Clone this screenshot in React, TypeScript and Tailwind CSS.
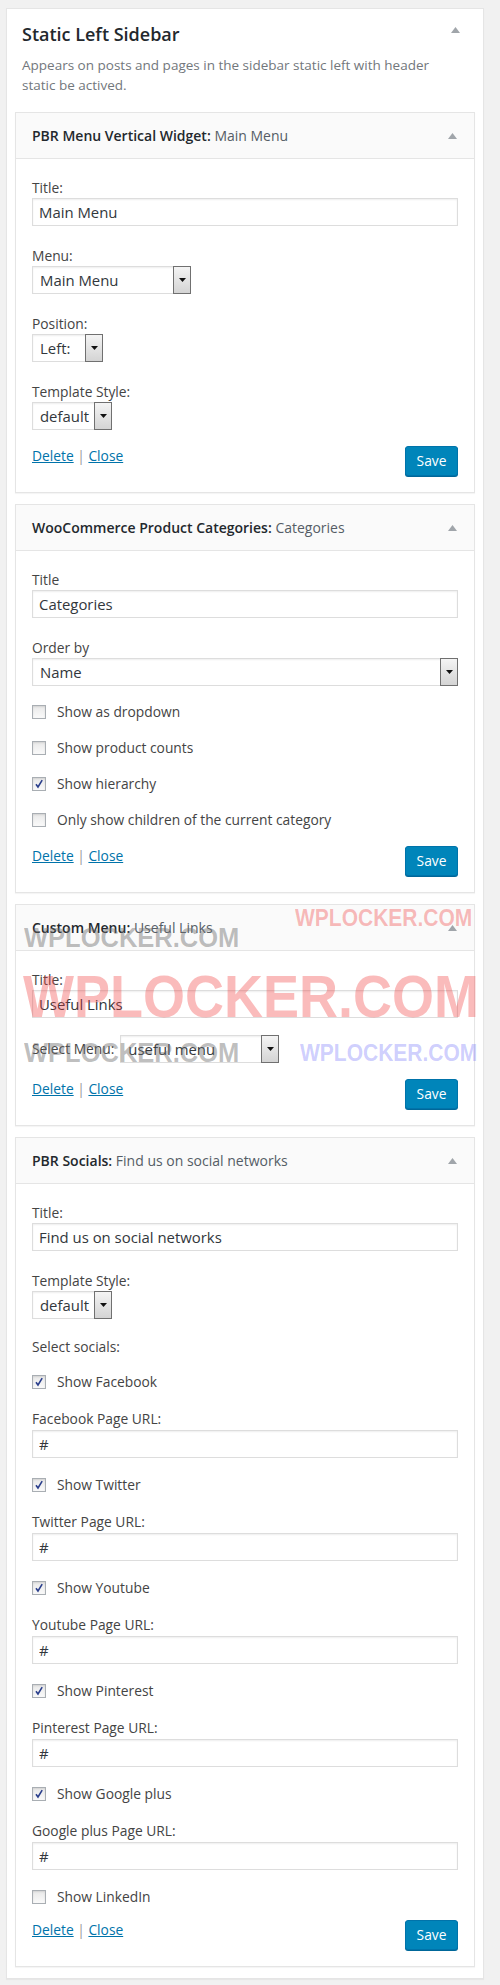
import React from "react";

function Caret({ className = "" }: { className?: string }) {
  return (
    <svg width="9" height="6" viewBox="0 0 9 6" className={className}>
      <polygon points="4.5,0 9,6 0,6" fill="#a0a5aa" />
    </svg>
  );
}

function Label({ children, className = "" }: { children: React.ReactNode; className?: string }) {
  return <div className={`text-[13.8px] leading-[19px] text-[#444] ${className}`}>{children}</div>;
}

function TextInput({ value, className = "mt-px" }: { value: string; className?: string }) {
  return (
    <input
      readOnly
      defaultValue={value}
      className={`block h-[28px] w-full border border-[#ddd] bg-white px-[6px] text-[14.9px] text-[#32373c] shadow-[inset_0_1px_2px_rgba(0,0,0,0.07)] outline-none ${className}`}
    />
  );
}

function Select({ value, width, className = "mt-px" }: { value: string; width: string; className?: string }) {
  return (
    <div className={`flex h-[28px] border border-[#ddd] bg-white shadow-[inset_0_1px_2px_rgba(0,0,0,0.07)] ${width} ${className}`}>
      <span className="flex-1 truncate pl-[7px] text-[14.9px] leading-[26px] text-[#32373c]">{value}</span>
      <span className="-mr-px -mt-px flex h-[28px] w-[18px] items-center justify-center border border-[#707070] bg-gradient-to-b from-[#f4f4f4] to-[#d4d4d4]">
        <svg width="7" height="4" viewBox="0 0 7 4">
          <polygon points="0,0 7,0 3.5,4" fill="#111" />
        </svg>
      </span>
    </div>
  );
}

function Check({ label, checked = false, className = "mt-4" }: { label: string; checked?: boolean; className?: string }) {
  return (
    <div className={`flex h-[20px] items-center ${className}`}>
      <span className="flex h-[14px] w-[14px] items-center justify-center border border-[#a9aeb3] bg-gradient-to-b from-[#e9e9e9] to-[#fafafa] shadow-[inset_0_1px_2px_rgba(0,0,0,0.1)]">
        {checked && (
          <svg width="10" height="10" viewBox="0 0 10 10">
            <path d="M2 5.2 L4 8 L8.2 1.2" fill="none" stroke="#2b3f8c" strokeWidth="1.6" />
          </svg>
        )}
      </span>
      <span className="ml-[11px] text-[13.8px] text-[#444]">{label}</span>
    </div>
  );
}

function Actions({ className = "mt-4" }: { className?: string }) {
  return (
    <div className={`flex items-start justify-between ${className}`}>
      <div className="text-[13.8px] leading-[19px] text-[#999]">
        <a className="text-[#0073aa] underline">Delete</a> | <a className="text-[#0073aa] underline">Close</a>
      </div>
      <button className="h-[30px] w-[53px] rounded-[3px] border border-[#0073aa] bg-[#0085ba] text-[13.8px] text-white shadow-[0_1px_0_#006799]">
        Save
      </button>
    </div>
  );
}

function Widget({ name, title, children }: { name: string; title: string; children: React.ReactNode }) {
  return (
    <div className="border border-[#e5e5e5] bg-white shadow-[0_1px_1px_rgba(0,0,0,0.04)]">
      <div className="flex h-[46px] items-center justify-between border-b border-[#e5e5e5] bg-[#fafafa] px-4">
        <div className="text-[14px] text-[#23282d]">
          <span className="font-semibold">{name}:</span> <span className="text-[#555d66]">{title}</span>
        </div>
        <Caret className="mr-[1px]" />
      </div>
      <div className="px-4 pb-4 pt-[19px]">{children}</div>
    </div>
  );
}

const socials = ["Facebook", "Twitter", "Youtube", "Pinterest", "Google plus"];

export default function App() {
  return (
    <div className="relative min-h-[1985px] bg-[#f1f1f1] pl-[6px] pr-[16px] pt-[8px] font-['Open_Sans','Liberation_Sans',sans-serif]">
      <div className="border border-[#e5e5e5] bg-white px-[8px] pb-[11px] shadow-[0_1px_1px_rgba(0,0,0,0.04)]">
        <div className="flex items-start justify-between px-[7px] pt-[13px]">
          <h2 className="text-[18px] font-semibold leading-[24px] text-[#23282d]">Static Left Sidebar</h2>
          <Caret className="mr-[8px] mt-[5px]" />
        </div>
        <p className="mt-[9px] pl-[7px] pr-[15px] text-[13.5px] leading-[20px] text-[#72777c]">
          Appears on posts and pages in the sidebar static left with header static be actived.
        </p>

        <div className="mt-[17px] flex flex-col gap-[11px]">
          <Widget name="PBR Menu Vertical Widget" title="Main Menu">
            <Label>Title:</Label>
            <TextInput value="Main Menu" />
            <Label className="mt-5">Menu:</Label>
            <Select value="Main Menu" width="w-[159px]" />
            <Label className="mt-5">Position:</Label>
            <Select value="Left:" width="w-[71px]" />
            <Label className="mt-5">Template Style:</Label>
            <Select value="default" width="w-[80px]" />
            <Actions />
          </Widget>

          <Widget name="WooCommerce Product Categories" title="Categories">
            <Label>Title</Label>
            <TextInput value="Categories" />
            <Label className="mt-5">Order by</Label>
            <Select value="Name" width="w-full" />
            <Check label="Show as dropdown" />
            <Check label="Show product counts" />
            <Check label="Show hierarchy" checked />
            <Check label="Only show children of the current category" />
            <Actions />
          </Widget>

          <Widget name="Custom Menu" title="Useful Links">
            <Label>Title:</Label>
            <TextInput value="Useful Links" />
            <div className="mt-[17px] flex items-center">
              <span className="mr-[6px] text-[13.8px] text-[#444]">Select Menu:</span>
              <Select value="useful menu" width="w-[159px]" className="" />
            </div>
            <Actions />
          </Widget>

          <Widget name="PBR Socials" title="Find us on social networks">
            <Label>Title:</Label>
            <TextInput value="Find us on social networks" />
            <Label className="mt-5">Template Style:</Label>
            <Select value="default" width="w-[80px]" />
            <Label className="mt-[18px]">Select socials:</Label>
            {socials.map((s, i) => (
              <div key={s}>
                <Check label={`Show ${s}`} checked className={i === 0 ? "mt-4" : "mt-[17px]"} />
                <Label className="mt-[17px]">{s} Page URL:</Label>
                <TextInput value="#" className="mt-[2px]" />
              </div>
            ))}
            <Check label="Show LinkedIn" className="mt-[17px]" />
            <Actions className="mt-[13px]" />
          </Widget>
        </div>
      </div>

      {/* watermarks */}
      <div className="pointer-events-none absolute left-[295px] top-[905px] origin-top-left scale-y-[1.12] font-['Liberation_Sans',sans-serif] text-[21px] font-bold leading-[24px] text-[rgba(240,60,60,0.35)]">
        WPLOCKER.COM
      </div>
      <div className="pointer-events-none absolute left-[24px] top-[922px] origin-top-left scale-y-[1.1] font-['Liberation_Sans',sans-serif] text-[25.5px] font-bold leading-[28px] text-[rgba(110,110,110,0.45)]">
        WPLOCKER.COM
      </div>
      <div className="pointer-events-none absolute left-[23px] top-[964px] origin-top-left scale-y-[1.1] font-['Liberation_Sans',sans-serif] text-[54px] font-bold leading-[58px] text-[rgba(240,60,60,0.35)]">
        WPLOCKER.COM
      </div>
      <div className="pointer-events-none absolute left-[24px] top-[1037px] origin-top-left scale-y-[1.1] font-['Liberation_Sans',sans-serif] text-[25.5px] font-bold leading-[28px] text-[rgba(110,110,110,0.45)]">
        WPLOCKER.COM
      </div>
      <div className="pointer-events-none absolute left-[300px] top-[1040px] origin-top-left scale-y-[1.12] font-['Liberation_Sans',sans-serif] text-[21px] font-bold leading-[24px] text-[rgba(90,90,250,0.3)]">
        WPLOCKER.COM
      </div>
    </div>
  );
}
